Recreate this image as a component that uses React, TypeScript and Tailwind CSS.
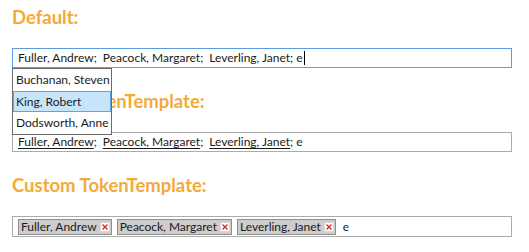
import React from "react";

const body = { fontFamily: 'Lato, "Open Sans", sans-serif' };
const head = { fontFamily: 'Lato, "Open Sans", sans-serif' };

function Heading({ children }: { children: React.ReactNode }) {
  return (
    <div className="h-12 pt-[5px] text-[18.5px] leading-[24px] font-bold text-[#f3aa3a] whitespace-nowrap" style={head}>
      {children}
    </div>
  );
}

function XIcon() {
  return (
    <svg width="10" height="10" viewBox="0 0 10 10" className="ml-[3px] shrink-0">
      <rect x="0.5" y="0.5" width="9" height="9" fill="#ffffff" stroke="#d8d8d8" />
      <path d="M2.5 2.5 L7.5 7.5 M7.5 2.5 L2.5 7.5" stroke="#e02020" strokeWidth="1.3" />
    </svg>
  );
}

const names = ["Fuller, Andrew", "Peacock, Margaret", "Leverling, Janet"];

export default function App() {
  return (
    <div className="w-[529px] h-[252px] bg-white pl-3 text-[#1a1a1a] text-[12px]" style={body}>
      {/* Section 1 */}
      <div className="h-[84px] flex flex-col">
        <Heading>Default:</Heading>
        <div className="relative">
          <div className="w-[500px] h-5 border border-[#5a9be2] flex items-center pl-[5px] leading-none whitespace-nowrap">
            {names.map((n, i) => (
              <span key={n} className={i === 2 ? "mr-[3px] whitespace-pre" : "mr-[6px] whitespace-pre"}>{n};</span>
            ))}
            <span>e</span>
            <span className="w-px h-[14px] bg-black ml-px" />
          </div>
          <div className="absolute left-0 top-full z-10 w-[100px] h-[67px] bg-white border border-[#6b6b6b] flex flex-col whitespace-nowrap">
            <div className="h-[22px] flex items-center pl-[3px]">Buchanan, Steven</div>
            <div className="h-[22px] flex items-center pl-[2px] bg-[#c6e5fa] border border-[#5ba5e8]">King, Robert</div>
            <div className="h-[22px] flex items-center pl-[3px]">Dodsworth, Anne</div>
          </div>
        </div>
      </div>
      {/* Section 2 */}
      <div className="h-[84px] flex flex-col">
        <Heading>Default TokenTemplate:</Heading>
        <div className="w-[500px] h-5 border border-[#ababab] flex items-center pl-[5px] leading-none whitespace-nowrap">
          {names.map((n, i) => (
            <span key={n} className={i === 2 ? "mr-[3px] whitespace-pre" : "mr-[6px] whitespace-pre"}>
              <span className="underline underline-offset-2">{n}</span>;
            </span>
          ))}
          <span>e</span>
        </div>
      </div>
      {/* Section 3 */}
      <div className="h-[84px] flex flex-col">
        <Heading>Custom TokenTemplate:</Heading>
        <div className="w-[500px] h-[21px] border border-[#ababab] flex items-center pl-[5px] gap-[5px] leading-none whitespace-nowrap">
          {names.map((n) => (
            <div key={n} className="h-4 flex items-center bg-[#cdcdcd] border border-[#8f8f8f] pl-[2px] pr-px">
              <span>{n}</span>
              <XIcon />
            </div>
          ))}
          <span className="ml-[2px]">e</span>
        </div>
      </div>
    </div>
  );
}
